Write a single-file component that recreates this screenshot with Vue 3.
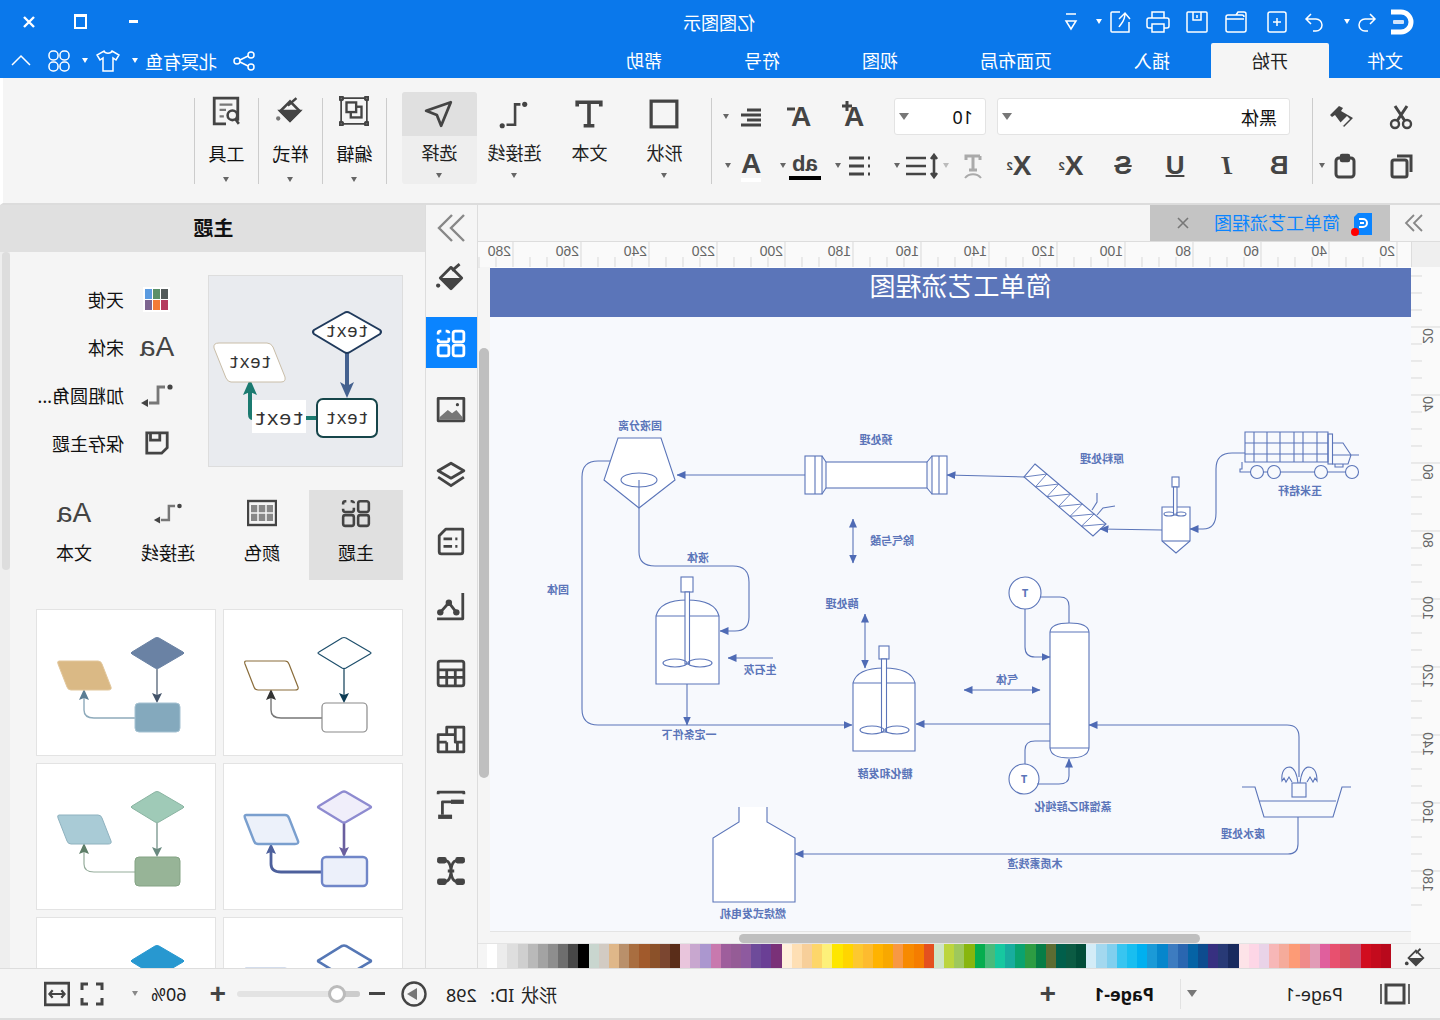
<template>
  <div class="app">
    <!-- title bar -->
    <header class="titlebar">
      <div class="qa">
        <svg class="logo" viewBox="0 0 26 26" width="26" height="26"><path d="M24 3H14a10 10 0 0 0 0 20h10" fill="none" stroke="#fff" stroke-width="5"/><rect x="11" y="11" width="11" height="4" rx="1" fill="#cfe3fb"/></svg>
        <svg class="qi m10" viewBox="0 0 24 24"><path d="M9 4 4 9l5 5M4 9h10a6 6 0 0 1 0 12h-3"/></svg>
        <i class="car w m5"></i>
        <svg class="qi m18" viewBox="0 0 24 24"><path d="m15 4 5 5-5 5M20 9H10a6 6 0 0 0 0 12h3"/></svg>
        <svg class="qi m13" viewBox="0 0 24 24"><rect x="3" y="2" width="18" height="20" rx="2"/><path d="M12 8v8M8 12h8"/></svg>
        <svg class="qi m17" viewBox="0 0 24 24"><path d="M2 8V20a2 2 0 0 0 2 2h16a2 2 0 0 0 2-2V7a2 2 0 0 0-2-2H6a2 2 0 0 0-2 2M4 9h18M2 8V4a2 2 0 0 1 2-2h6l2 3"/></svg>
        <svg class="qi m15" viewBox="0 0 24 24"><path d="M3 2h18a1 1 0 0 1 1 1v18a1 1 0 0 1-1 1H3a1 1 0 0 1-1-1V3a1 1 0 0 1 1-1ZM8 2v8h8V2M12 5v3"/></svg>
        <svg class="qi m15" viewBox="0 0 24 24"><path d="M6 8V2h12v6M6 18H3a2 2 0 0 1-2-2v-6a2 2 0 0 1 2-2h18a2 2 0 0 1 2 2v6a2 2 0 0 1-2 2h-3M6 14h12v8H6z"/></svg>
        <svg class="qi m15" viewBox="0 0 24 24"><path d="M2 12v10h17a1 1 0 0 0 1-1V3a1 1 0 0 0-1-1h-8M12 9 6 3 1 9M6 3c0 9 4 10 6 14"/></svg>
        <i class="car w m5"></i>
        <svg class="qi small m13" viewBox="0 0 24 24"><path d="M7 4h10M7 11h10l-5 8z"/></svg>
      </div>
      <div class="apptitle">亿图图示</div>
      <div class="winctl">
        <span class="wmin"></span>
        <span class="wmax"></span>
        <svg viewBox="0 0 12 12" width="12" height="12"><path d="M1 1l10 10M11 1 1 11" stroke="#fff" stroke-width="2.4"/></svg>
      </div>
    </header>

    <!-- menu tabs -->
    <nav class="menubar">
      <div class="tabs">
        <span v-for="t in menus" :key="t" class="mtab" :class="{ on: t === '开始' }">{{ t }}</span>
      </div>
      <div class="userbar">
        <svg class="qi ub1" viewBox="0 0 24 24"><circle cx="5" cy="6" r="3"/><circle cx="5" cy="18" r="3"/><circle cx="19" cy="12" r="3"/><path d="M8 7l8 4M8 17l8-4"/></svg>
        <span class="uname">北冥有鱼</span>
        <i class="car w ub2"></i>
        <svg class="qi ub3" viewBox="0 0 24 24"><path d="M8 2 1 6l3 5 3-2v13h10V9l3 2 3-5-7-4c-1 3-7 3-8 0Z"/></svg>
        <i class="car w ub4"></i>
        <svg class="qi ub5" viewBox="0 0 24 24"><rect x="2" y="2" width="9" height="9" rx="4"/><rect x="13" y="2" width="9" height="9" rx="4"/><rect x="2" y="13" width="9" height="9" rx="4"/><rect x="13" y="13" width="9" height="9" rx="4"/></svg>
        <svg class="qi ub6" viewBox="0 0 24 24"><path d="m3 16 9-9 9 9"/></svg>
      </div>
    </nav>

    <!-- ribbon -->
    <section class="ribbon">
      <div class="rclip">
        <div class="crow">
          <svg class="ric cut" viewBox="0 0 26 26"><circle cx="7" cy="20" r="4"/><circle cx="19" cy="20" r="4"/><path d="M9 17 19 2M17 17 7 2" stroke-width="3"/></svg>
          <svg class="ric brush" viewBox="0 0 26 26"><path d="m15 2 9 9-2 2-3-2-9 12-9-9 12-7-2-3Z" fill="#444" stroke="none"/><path d="m7 12 7 7-3 3-7-7z" fill="#f5f5f5" stroke="none"/></svg>
        </div>
        <div class="crow r2">
          <svg class="ric cut" viewBox="0 0 26 26"><path d="M3 19V3h14" stroke-width="3"/><rect x="7" y="7" width="15" height="17" rx="2" stroke-width="3"/></svg>
          <svg class="ric paste" viewBox="0 0 26 26"><rect x="4" y="5" width="18" height="19" rx="3" stroke-width="3"/><rect x="9" y="2" width="8" height="6" rx="1" fill="#444"/></svg>
          <i class="car paste-car"></i>
        </div>
      </div>
      <i class="vsep"></i>
      <div class="rfont">
        <div class="frow1">
          <div class="sel fontsel"><span>黑体</span><i class="car lg"></i></div>
          <div class="sel sizesel"><span>10</span><i class="car lg"></i></div>
          <div class="fbtn grow"><span>A</span><svg class="fmark" viewBox="0 0 10 10" width="10" height="10"><path d="M5 0v10M0 5h10" stroke="#444" stroke-width="3"/></svg></div>
          <div class="fbtn shrink"><span>A</span><svg class="fmark lo" viewBox="0 0 10 10" width="10" height="10"><path d="M1 5h8" stroke="#444" stroke-width="3"/></svg></div>
          <svg class="ric alignic" viewBox="0 0 24 24"><path d="M2 5h14M2 10h20M2 15h14M2 20h20" stroke-width="3"/></svg>
          <i class="car alignc"></i>
        </div>
        <div class="frow2">
          <span class="fc w52 tb">B</span>
          <span class="fc w52 tb it">I</span>
          <span class="fc w52 tb ul">U</span>
          <span class="fc w52 tb st">S</span>
          <span class="fc w52 xx">X<sup>2</sup></span>
          <span class="fc w52 xx">X<sub>2</sub></span>
          <svg class="fc w40 clr" viewBox="0 0 40 26" height="26"><path d="M13 3h14v4M20 3v14M16 17h8M13 3v4" stroke="#aaa" stroke-width="3" fill="none"/><path d="M12 25c4-5 12-5 16 0" stroke="#aaa" stroke-width="2" fill="none"/></svg>
          <span class="fc w14"><i class="car lite"></i></span>
          <svg class="fc w36 ln" viewBox="0 0 36 26" height="26"><path d="M5 8V4M5 22v-4M2 6l3-4 3 4M2 20l3 4 3-4M5 7v12M13 5h20M13 13h20M13 21h20" fill="none" stroke="#444" stroke-width="2.600"/></svg>
          <span class="fc w12"><i class="car"></i></span>
          <span class="sp12"></span>
          <svg class="fc w36 ln" viewBox="0 0 36 26" height="26"><path d="M9 5h2M9 13h2M9 21h2M15 5h15M15 13h15M15 21h15" fill="none" stroke="#444" stroke-width="2.800"/></svg>
          <span class="fc w10"><i class="car"></i></span>
          <span class="sp12"></span>
          <span class="fc w32 ab">ab</span>
          <span class="fc w12"><i class="car"></i></span>
          <span class="sp6"></span>
          <span class="fc w40"><span class="aa">A</span></span>
          <span class="fc w6"><i class="car"></i></span>
        </div>
      </div>
      <i class="vsep"></i>
      <div class="bigs">
        <div class="big">
          <div class="bic"><svg class="ric r28" viewBox="0 0 28 28"><rect x="2" y="2" width="24" height="24" stroke-width="3"/></svg></div>
          <span>形状</span><i class="car"></i>
        </div>
        <div class="big">
          <div class="bic"><svg class="ric r28" viewBox="0 0 28 28"><path d="M3 7V3h22v4M14 3v22M9 25h10" stroke-width="3.400"/></svg></div>
          <span>文本</span>
        </div>
        <div class="big">
          <div class="bic"><svg class="ric r28" viewBox="0 0 28 28"><circle cx="4" cy="5" r="2.400" fill="#444" stroke="none"/><circle cx="25" cy="25" r="2.400" fill="#444" stroke="none"/><path d="M8 5h5v19h8"/></svg></div>
          <span>连接线</span><i class="car"></i>
        </div>
        <div class="big sel-on">
          <div class="bic"><svg class="ric r28" viewBox="0 0 28 28"><path d="M3 3 26 11l-10 4-4 10Z" stroke-width="2.600" stroke-linejoin="round"/></svg></div>
          <span>选择</span><i class="car"></i>
        </div>
      </div>
      <i class="vsep s15"></i>
      <div class="tool">
        <svg class="ric r28" viewBox="0 0 28 28"><rect x="2" y="2" width="24" height="24" rx="1" stroke-width="1.600"/><circle cx="2" cy="2" r="1.600" fill="#f5f5f5"/><circle cx="26" cy="2" r="1.600" fill="#f5f5f5"/><circle cx="2" cy="26" r="1.600" fill="#f5f5f5"/><circle cx="26" cy="26" r="1.600" fill="#f5f5f5"/><rect x="7" y="10" width="10" height="10" stroke-width="2.200"/><rect x="12" y="6" width="9" height="9" stroke-width="2.200" fill="#f5f5f5"/></svg>
        <span>编辑</span><i class="car"></i>
      </div>
      <div class="tool">
        <svg class="ric r28" viewBox="0 0 28 28"><path d="M8 2 16 9" stroke-width="2.400"/><path d="m14 5 9 9-9 9-9-9Z" stroke-width="2.400"/><path d="m5 14h18l-9 9Z" fill="#444"/><circle cx="25" cy="21" r="2" fill="#777" stroke="none"/></svg>
        <span>样式</span><i class="car"></i>
      </div>
      <div class="tool">
        <svg class="ric r28" viewBox="0 0 28 28"><path d="M3 23V2h22v24H14" stroke-width="2.600"/><path d="M8 8h12M14 13h6M16 19h4" stroke-width="2.200" stroke="#777"/><circle cx="8" cy="18" r="4.500" stroke-width="2.400"/><path d="m5 22-3 4" stroke-width="2.400"/></svg>
        <span>工具</span><i class="car"></i>
      </div>
    </section>

    <main class="main">
      <!-- canvas side -->
      <div class="cv">
        <div class="tabbar">
          <svg class="tchev" viewBox="0 0 20 20" width="20" height="20"><path d="m2 2 8 8-8 8M10 2l8 8-8 8" fill="none" stroke="#888" stroke-width="1.800"/></svg>
          <div class="doctab">
            <svg viewBox="0 0 24 26" width="24" height="26" class="docic"><path d="M3 3h14l4 4v18H3z" fill="#0a84ff"/><path d="M16 9h-4a4 4 0 0 0 0 8h4M11 13h4" fill="none" stroke="#fff" stroke-width="2"/><circle cx="20" cy="22" r="4" fill="#f00"/></svg>
            <span class="docname">简单工艺流程图</span>
            <svg viewBox="0 0 12 12" width="12" height="12" class="docx"><path d="m1 1 10 10M11 1 1 11" stroke="#777" stroke-width="1.600"/></svg>
          </div>
        </div>
        <div class="rulerh">
          <span class="corner"></span>
          <svg width="934" height="26" viewBox="0 0 934 26">
            <path v-for="k in hTicks" :key="k.x" :d="`M${k.x} ${k.major ? 0 : 15}V26`" stroke="#d9d9d9" fill="none"/>
            <text v-for="k in hNums" :key="k.n" :x="k.x + 2" y="14" class="rnum">{{ k.n }}</text>
          </svg>
        </div>
        <div class="work">
          <svg class="rulerv" width="29" height="676" viewBox="0 0 29 676">
            <path v-for="y in vTicks" :key="y.y" :d="`M${y.major ? 0 : 18} ${y.y}H29`" stroke="#d9d9d9" fill="none"/>
            <text v-for="y in vNums" :key="y.n" class="rnum" text-anchor="middle" :transform="`translate(17 ${y.y + 9}) rotate(-90)`">{{ y.n }}</text>
          </svg>
          <div class="sheet">
            <div class="band">简单工艺流程图</div>
            <svg class="dia" viewBox="0 317 921 614" width="921" height="614">
              <defs>
                <marker id="arw" viewBox="0 0 9 8" refX="8.500" refY="4" markerWidth="9" markerHeight="8" markerUnits="userSpaceOnUse" orient="auto-start-reverse"><path d="M0 0 9 4 0 8Z" fill="#4f6bb5"/></marker>
              </defs>
              <g transform="translate(1411 0) scale(-1 1)" fill="none" stroke="#5b75b9" stroke-width="1.100">
                <!-- separator -->
                <path d="M618 438h43l14 42-36 28-35-28Z" fill="#fff"/>
                <ellipse cx="639" cy="480" rx="18" ry="7"/>
                <path d="M639 480v72q0 14 16 14h78q16 0 16 16v35q0 14-14 14h-15" marker-end="url(#arw)"/>
                <path d="M610 461h-12q-16 0-16 16v232q0 16 16 16h254" marker-end="url(#arw)"/>
                <!-- pipe -->
                <rect x="826" y="462" width="101" height="26" fill="#fff"/>
                <rect x="805" y="456" width="17" height="38" fill="#fff"/>
                <path d="M815 456v38M822 456l4 6M822 494l4-6"/>
                <rect x="932" y="456" width="15" height="38" fill="#fff"/>
                <path d="M939 456v38M932 456l-5 6M932 494l-5-6"/>
                <path d="M805 475H677" marker-end="url(#arw)"/>
                <path d="M1025 477l-78-2" marker-end="url(#arw)"/>
                <!-- screw -->
                <path d="M1035 464 1106 524 1093 536 1024 477Z" fill="#fff"/>
                <path :d="screw" stroke-width=".9"/>
                <path d="M1097 493v9l-5 8M1115 506l-12 2-6 7"/>
                <path d="M1162 530l-62-1" marker-end="url(#arw)"/>
                <!-- small mixer -->
                <path d="M1162 507h28v34l-14 12-14-12Z" fill="#fff"/>
                <path d="M1162 541h28"/>
                <rect x="1172" y="477" width="7" height="10" fill="#fff"/>
                <rect x="1173.500" y="487" width="3.500" height="28" fill="#fff"/>
                <ellipse cx="1169" cy="514" rx="5" ry="2"/>
                <ellipse cx="1181" cy="514" rx="5" ry="2"/>
                <!-- truck -->
                <path d="M1245 432h83v30h-83ZM1254 432v30M1267 432v30M1280 432v30M1294 432v30M1303 432v30M1317 432v30M1245 443h83M1245 454h83"/>
                <rect x="1328" y="434" width="4.500" height="30"/>
                <path d="M1332 443h11l8 12-3 9h-16M1332 455h27M1343 443l8 12M1242 462v7h-2v3h105M1335 464v3h8v-3"/>
                <circle v-for="w in [1257, 1274, 1321, 1352]" :key="w" :cx="w" cy="472" r="6.500" fill="#f7f9fd"/>
                <path d="M1245 453h-13q-16 0-16 16v44q0 16-13 16h-13" marker-end="url(#arw)"/>
                <!-- tank 1 -->
                <path d="M656 616v68h63v-68Q715 600 687 600 660 600 656 616Z" fill="#fff"/>
                <path d="M656 616h63"/>
                <rect x="681" y="577" width="12" height="15" fill="#fff"/>
                <rect x="685" y="592" width="4.500" height="72" fill="#fff"/>
                <ellipse cx="675" cy="663" rx="12" ry="4"/>
                <ellipse cx="700" cy="663" rx="12" ry="4"/>
                <path d="M687 684v41" marker-end="url(#arw)"/>
                <path d="M773 658h-45" marker-end="url(#arw)"/>
                <path d="M853 519v44" marker-start="url(#arw)" marker-end="url(#arw)"/>
                <!-- tank 2 -->
                <path d="M853 683v68h62v-68Q911 668 884 668 857 668 853 683Z" fill="#fff"/>
                <path d="M853 683h62"/>
                <rect x="879" y="646" width="10" height="13" fill="#fff"/>
                <rect x="881.500" y="659" width="5" height="73" fill="#fff"/>
                <ellipse cx="872" cy="730" rx="12" ry="4"/>
                <ellipse cx="897" cy="730" rx="12" ry="4"/>
                <path d="M865 614v54" marker-start="url(#arw)" marker-end="url(#arw)"/>
                <!-- column -->
                <path d="M1050 632v116q1 10 19.500 10 18.500 0 19.500-10V632q-1-9-19.500-9-18.500 0-19.500 9Z" fill="#fff"/>
                <path d="M1050 632h39M1050 748h39"/>
                <circle cx="1025" cy="593" r="16" fill="#fff"/>
                <circle cx="1024" cy="779" r="15" fill="#fff"/>
                <path d="M1040 597h20q9 0 9 9v17M1025 609v38q0 10 10 10h15" marker-end="url(#arw)"/>
                <path d="M1050 741h-15q-10 0-10 9v14M1037 784h22q10 0 10-8v-17" marker-end="url(#arw)"/>
                <path d="M1050 724H916" marker-end="url(#arw)"/>
                <path d="M964 690h76" marker-start="url(#arw)" marker-end="url(#arw)"/>
                <path d="M1299 777v-40q0-12-12-12H1089" marker-end="url(#arw)"/>
                <!-- waste water -->
                <path d="M1242 787h13l9 30h69l9-30h9M1259 801h77"/>
                <rect x="1292" y="783" width="14" height="14"/>
                <path d="M1298 783c-1-8-3-15-8-16-5 0-9 4-8 14l2-3 2 4 3-5 3 5M1300 783c1-8 3-15 8-16 5 0 9 4 9 14l-2-3-2 4-3-5-3 5"/>
                <path d="M1298 817v27q0 10-10 10H795" marker-end="url(#arw)"/>
                <!-- generator -->
                <path d="M739 807v15l-26 16v64h82v-64l-28-16v-15" fill="#fff"/>
              </g>
              <text v-for="l in labels" :key="l.t" class="lab" :x="1411 - l.x" :y="l.y + 4" text-anchor="middle">{{ l.t }}</text>
            </svg>
            <div class="hscroll"><i></i></div>
          </div>
          <div class="vscroll"><i></i></div>
        </div>
        <div class="palette">
          <svg class="pbucket" viewBox="0 0 24 24" width="22" height="22"><path d="M6 3l5 5" stroke="#444" stroke-width="2"/><path d="m11 5 8 8-8 8-8-8Z" fill="none" stroke="#444" stroke-width="2"/><path d="M3 13h16l-8 8Z" fill="#444"/><circle cx="21" cy="19" r="2" fill="#444"/></svg>
          <div class="swatches">
            <i v-for="(c, i) in colors" :key="i" :style="{ background: c }"></i>
          </div>
          <span class="pend"></span>
        </div>
      </div>

      <!-- tool strip -->
      <aside class="strip">
        <div class="chev"><svg viewBox="0 0 30 30" width="30" height="30"><path d="m2 2 13 13L2 28M14 2l13 13-13 13" fill="none" stroke="#888" stroke-width="2.400"/></svg></div>
        <div class="sitem"><svg viewBox="0 0 28 28"><path d="M6 2l7 6"/><path d="m14 5 10 10-10 10L4 15Z"/><path d="M4 15h20L14 25Z" class="fil"/><circle cx="26" cy="22" r="2" class="fil"/></svg></div>
        <div class="sitem on"><svg viewBox="0 0 28 28"><rect x="2" y="3" width="10" height="10" rx="2"/><path d="M16 5a2 2 0 0 1 2-2h1M23 3h1a2 2 0 0 1 2 2v1M26 10v1a2 2 0 0 1-2 2h-6a2 2 0 0 1-2-2V9"/><rect x="2" y="16" width="10" height="10" rx="2"/><rect x="16" y="16" width="10" height="10" rx="2"/></svg></div>
        <div class="sitem"><svg viewBox="0 0 28 28"><rect x="2" y="4" width="24" height="21" stroke-width="2.600"/><circle cx="8" cy="10" r="1.500" class="fil"/><path d="M3 22l6-7 4 3 4-3 8 7v2H3Z" class="fil grey"/></svg></div>
        <div class="sitem"><svg viewBox="0 0 28 28"><path d="M14 3l12 7-12 7-12-7Z"/><path d="m2 16 12 8 12-8"/></svg></div>
        <div class="sitem"><svg viewBox="0 0 28 28"><path d="M3 3h16l6 6v15a2 2 0 0 1-2 2H5a2 2 0 0 1-2-2Z"/><path d="M8 12h2M8 19h2M13 12h8M13 19h8" /></svg></div>
        <div class="sitem"><svg viewBox="0 0 28 28"><path d="M3 1v24h24" /><circle cx="9" cy="19" r="3" class="fil"/><circle cx="16" cy="10" r="3" class="fil"/><circle cx="24" cy="19" r="3" class="fil"/><path d="m9 19 7-9 8 9"/></svg></div>
        <div class="sitem"><svg viewBox="0 0 28 28"><rect x="2" y="3" width="24" height="23" rx="2"/><path d="M2 11h24M2 18h24M10 11v15M18 11v15"/></svg></div>
        <div class="sitem"><svg viewBox="0 0 28 28"><path d="M2 3h16v7h8v16H2ZM2 17h6v9M10 3v7h8M10 10v7H8M18 17h8M18 17v9"/></svg></div>
        <div class="sitem"><svg viewBox="0 0 28 28"><path d="M2 4V2h24v2" /><path d="M2 11h12" stroke-width="4"/><path d="M14 11h8v12" /><path d="M13 25h13" stroke-width="4"/></svg></div>
        <div class="sitem"><svg viewBox="0 0 28 28"><path d="M8 4c6 0 6 10 6 10s0 10-6 10M20 4c-6 0-6 10-6 10s0 10 6 10M11 14h6"/><rect x="1" y="1" width="9" height="6" rx="2" class="fil"/><rect x="18" y="1" width="9" height="6" rx="2" class="fil"/><rect x="1" y="21" width="9" height="6" rx="2" class="fil"/><rect x="18" y="21" width="9" height="6" rx="2" class="fil"/></svg></div>
      </aside>

      <!-- theme panel -->
      <aside class="panel">
        <div class="phead">主题</div>
        <div class="pbody">
          <div class="pcontent">
            <div class="ptop">
              <div class="preview">
                <svg viewBox="0 0 195 192" width="195" height="192">
                  <g transform="translate(403 -275) scale(-1 1)" fill="none">
                    <path d="M347 353v38" stroke="#44618f" stroke-width="4"/>
                    <path d="m340 382 7 16 7-16-7 4Z" fill="#44618f"/>
                    <path d="M317 418h-64q-3 0-3-4v-22" stroke="#1b7a70" stroke-width="4"/>
                    <path d="m243 395 7-16 7 16-7-3Z" fill="#1b7a70"/>
                    <path d="M344 313q3-2 6 0l30 17q2 2 0 4l-30 18q-3 2-6 0l-30-18q-2-2 0-4Z" fill="#fff" stroke="#203a5c" stroke-width="2"/>
                    <rect x="317" y="399" width="60" height="38" rx="6" fill="#fff" stroke="#16454a" stroke-width="2"/>
                    <path d="M219 343h48q4 0 6 4l12 30q1 5-4 5h-50q-3 0-5-4l-12-30q-1-5 5-5Z" fill="#fff" stroke="#c9bda8"/>
                  </g>
                  <rect x="97" y="125" width="54" height="33" fill="#fff"/>
                  <text x="56" y="62" class="pv" text-anchor="middle">text</text>
                  <text x="56" y="149" class="pv" text-anchor="middle">text</text>
                  <text x="153" y="93" class="pv" text-anchor="middle">text</text>
                  <text x="124" y="150" class="pv lg" text-anchor="middle">text</text>
                </svg>
              </div>
              <div class="plist">
                <div class="pli">
                  <span class="pic"><span class="pal"><i v-for="c in angel" :key="c" :style="{ background: c }"></i></span></span>
                  <span class="ptx">天使</span>
                </div>
                <div class="pli"><span class="pic aatx">Aa</span><span class="ptx">宋体</span></div>
                <div class="pli">
                  <span class="pic"><svg viewBox="0 0 34 28" width="34" height="28" class="ric"><circle cx="4" cy="6" r="2.600" fill="#444" stroke="none"/><path d="M9 6h7v16h9" stroke-width="2.800" stroke="#777"/><path d="m33 22-7-4v8Z" fill="#444" stroke="none"/></svg></span>
                  <span class="ptx">加粗圆角...</span>
                </div>
                <div class="pli">
                  <span class="pic"><svg viewBox="0 0 28 28" width="26" height="26" class="ric"><path d="M3 3h22v22H9l-6-6ZM11 3v8h10V3" stroke-width="3"/></svg></span>
                  <span class="ptx">保存主题</span>
                </div>
              </div>
            </div>
            <div class="ptabs">
              <div class="ptab on">
                <svg viewBox="0 0 28 28" class="ric r28"><rect x="2" y="3" width="10" height="10" rx="2" stroke-width="2.400"/><path d="M16 5a2 2 0 0 1 2-2h1M23 3h1a2 2 0 0 1 2 2v1M26 10v1a2 2 0 0 1-2 2h-6a2 2 0 0 1-2-2V9" stroke-width="2.400"/><rect x="2" y="16" width="10" height="10" rx="2" stroke-width="2.400"/><rect x="16" y="16" width="10" height="10" rx="2" stroke-width="2.400"/></svg>
                <span>主题</span>
              </div>
              <div class="ptab">
                <svg viewBox="0 0 30 26" class="ric r28"><rect x="1" y="1" width="28" height="24" stroke-width="2.400"/><path d="M4 5h22v16H4Z" fill="#888" stroke="none"/><path d="M11 5v16M19 5v16M4 13h22" stroke="#f5f5f5" stroke-width="1.500"/></svg>
                <span>颜色</span>
              </div>
              <div class="ptab">
                <svg viewBox="0 0 34 28" class="ric r28"><circle cx="4" cy="6" r="2.600" fill="#444" stroke="none"/><path d="M9 6h7v16h9" stroke-width="2.800" stroke="#777"/><path d="m33 22-7-4v8Z" fill="#444" stroke="none"/></svg>
                <span>连接线</span>
              </div>
              <div class="ptab">
                <em class="aatx">Aa</em>
                <span>文本</span>
              </div>
            </div>
            <div class="cards">
              <div v-for="(c, i) in themes" :key="i" class="card">
                <svg viewBox="0 0 180 147" width="180" height="147">
                  <g transform="translate(180 0) scale(-1 1)">
                    <path d="M121 60V92" :stroke="c.a1" :stroke-width="c.w1" fill="none"/>
                    <path d="m116 84 5 10 5-10-5 2Z" :fill="c.a1"/>
                    <path d="M99 109H58q-10 0-10-8V85" :stroke="c.a2" :stroke-width="c.w2" fill="none" />
                    <path d="m43 91 5-11 5 11-5-2Z" :fill="c.ah || c.a2"/>
                    <path d="M119 29q2-1 4 0l24 14q2 1 0 2l-24 14q-2 1-4 0L96 45q-2-1 0-2Z" :fill="c.df" :stroke="c.ds" :stroke-width="c.sw"/>
                    <rect x="99" y="94" width="45" height="29" rx="4" :fill="c.rf" :stroke="c.rs" :stroke-width="c.sw"/>
                    <path d="M23 52h39q3 0 4 3l9 23q1 3-3 3H35q-3 0-4-3l-9-23q-1-3 1-3Z" :fill="c.pf" :stroke="c.ps" :stroke-width="c.sw"/>
                  </g>
                </svg>
              </div>
            </div>
          </div>
          <div class="pscroll"><i></i></div>
        </div>
      </aside>
    </main>

    <!-- status bar -->
    <footer class="status">
      <div class="st-left">
        <svg class="ric pagesic" viewBox="0 0 32 24"><path d="M2 2v20M30 2v20" stroke-width="2" stroke="#666"/><rect x="7" y="3" width="18" height="18" stroke-width="3"/></svg>
        <span class="pg1">Page-1</span>
        <i class="car lg pgc"></i>
        <span class="pgsep"></span>
        <b class="pg2">Page-1</b>
        <span class="plus pg3">+</span>
      </div>
      <div class="st-right">
        <span class="sid">形状 ID:&nbsp; 298</span>
        <svg class="ric playic" viewBox="0 0 26 26"><circle cx="13" cy="13" r="11.500" stroke-width="2.400"/><path d="M20 13 10 7v12Z" fill="#777" stroke="none"/></svg>
        <span class="minus"></span>
        <div class="slider"><i class="fill"></i><i class="knob"></i></div>
        <span class="plus pl2">+</span>
        <span class="zoomv">60%</span>
        <i class="car zoomc"></i>
        <svg class="ric fsic" viewBox="0 0 24 24"><path d="M2 8V2h6M16 2h6v6M22 16v6h-6M8 22H2v-6" stroke-width="3"/></svg>
        <svg class="ric fitic" viewBox="0 0 24 24"><rect x="1" y="2" width="22" height="20" stroke-width="2.600"/><path d="M5 12h14M8 8.500 5 12l3 3.500M16 8.500l3 3.500-3 3.500" stroke-width="2"/></svg>
      </div>
    </footer>
  </div>
</template>

<script setup>
const menus = ["文件", "开始", "插入", "页面布局", "视图", "符号", "帮助"];

const hTicks = [];
const hNums = [];
for (let i = 0; i < 56; i++) {
  const x = 14 + i * 17;
  hTicks.push({ x, major: i % 4 === 0 });
  if (i % 4 === 0) hNums.push({ x, n: 20 + (i / 4) * 20 });
}
const vTicks = [];
const vNums = [];
for (let i = 0; i < 38; i++) {
  const y = 9 + i * 17;
  const major = i % 4 === 3;
  vTicks.push({ y, major });
  if (major) vNums.push({ y, n: ((i + 1) / 4) * 20 });
}

// the auger inside the tilted conveyor
let screw = "";
for (let i = 0; i <= 6; i++) {
  const tx = 1035 + 11.83 * i;
  const ty = 464 + 10 * i;
  const bx = 1024 + 11.5 * i;
  const by = 477 + 9.83 * i;
  if (i > 0 && i < 6) screw += `M${tx} ${ty}L${bx} ${by}`;
  if (i < 6) screw += `M${bx} ${by}L${tx + 11.83} ${ty + 10}`;
}

const labels = [
  { t: "固液分离", x: 640, y: 426 },
  { t: "预处理", x: 876, y: 440 },
  { t: "原料处理", x: 1102, y: 459 },
  { t: "玉米秸秆", x: 1300, y: 491 },
  { t: "液体", x: 698, y: 558 },
  { t: "除气与酸", x: 892, y: 541 },
  { t: "固体", x: 558, y: 590 },
  { t: "酶处理", x: 842, y: 604 },
  { t: "生石灰", x: 760, y: 670 },
  { t: "气体", x: 1007, y: 680 },
  { t: "一定条件下", x: 689, y: 735 },
  { t: "糖化和发酵", x: 885, y: 774 },
  { t: "蒸馏和乙醇纯化", x: 1073, y: 807 },
  { t: "废水处理", x: 1243, y: 834 },
  { t: "木质素残渣", x: 1035, y: 864 },
  { t: "燃烧式发电机", x: 753, y: 914 },
  { t: "T", x: 1025, y: 593 },
  { t: "T ", x: 1024, y: 779 },
];

const angel = ["#535a5a", "#5a9068", "#5b9be0", "#b53c5f", "#f47b36", "#7d6590"];

const themes = [
  { df: "#fff", ds: "#1d4e6b", rf: "#fff", rs: "#8a8a8a", pf: "#fff", ps: "#8a6d3b", a1: "#0d3c55", a2: "#777", ah: "#333", w1: 1.2, w2: 1.4, sw: 1.2 },
  { df: "#6a82a4", ds: "#6a82a4", rf: "#84a9bd", rs: "#a5c2d2", pf: "#dab985", ps: "#e2c79c", a1: "#44546a", a2: "#8eaabb", ah: "#5a7d94", w1: 1.2, w2: 1.4, sw: 1 },
  { df: "#f0eefa", ds: "#8e8bd0", rf: "#ecf0fa", rs: "#7086c8", pf: "#ecf1fa", ps: "#7a9fce", a1: "#6a5f9f", a2: "#4d609c", w1: 2.6, w2: 2.8, sw: 2.4 },
  { df: "#9fcab7", ds: "#8ab4a2", rf: "#97b497", rs: "#84a384", pf: "#a9cbd6", ps: "#8fb2bf", a1: "#6a8a80", a2: "#96ad9c", ah: "#5e7e68", w1: 1.2, w2: 1.2, sw: 1 },
  { df: "#fff", ds: "#5577b5", rf: "#fff", rs: "#5577b5", pf: "#fff", ps: "#5577b5", a1: "#5577b5", a2: "#5577b5", w1: 2.6, w2: 2.6, sw: 2.6 },
  { df: "#2898d0", ds: "#2898d0", rf: "#2898d0", rs: "#2898d0", pf: "#2898d0", ps: "#2898d0", a1: "#2898d0", a2: "#2898d0", w1: 1.4, w2: 1.4, sw: 1 },
];

const colors = [
  "#ffffff", "#ececec", "#dedede", "#cfcfcf", "#b9b9b9", "#a3a3a3", "#8e8e8e", "#6e6e6e", "#474747", "#000000",
  "#c9d6cf", "#d2cbc3", "#dfb789", "#b9906b", "#a96e40", "#a15a2c", "#8b5129", "#7b4630", "#5a2d19",
  "#e9c5dc", "#c8a7cf", "#ab97cf", "#c879ae", "#9e5e9c", "#955c96", "#8e5a9f", "#6e4b9a", "#6a3f95", "#7a3178",
  "#fff0dc", "#fedfb4", "#f7cf9a", "#fdd66a", "#fdf07a", "#fee600", "#ffd500", "#fdc82f", "#fdbb2f", "#ffb300", "#f8a800", "#f89843", "#f78a00", "#f57d00", "#e4501f",
  "#cfe4c6", "#bcd53e", "#9ec85c", "#88b60e", "#06ad4f", "#48bb7b", "#17c8a0", "#18ad9e", "#0aa36f", "#2d9c43", "#067d46", "#5c6c32", "#015f4b", "#0b5b43", "#014d39",
  "#d3ecf7", "#a3d8ef", "#80cfee", "#38c5f0", "#19bef0", "#00b0f0", "#1b9ad7", "#0686cc", "#3d7cc0", "#2a66b0", "#0563a5", "#0d4c8f", "#373080", "#283a76", "#192a5e",
  "#fde3e8", "#fdd6e6", "#e9d3e8", "#f7b7b7", "#f5ab9b", "#fd9b76", "#ef8b8b", "#e19bb6", "#e05f9d", "#e8506f", "#d94f60", "#c94f75", "#d10d1f", "#c40b1d", "#b8091c",
].reverse();
</script>

<style>
html,
body {
  margin: 0;
  background: #f5f5f5;
}
</style>

<style scoped>
.app {
  width: 1440px;
  height: 1020px;
  overflow: hidden;
  display: flex;
  flex-direction: column;
  transform: scaleX(-1);
  background: #f5f5f5;
  color: #222;
  font-family: "Noto Sans", "Noto Sans CJK SC", sans-serif;
  font-size: 18px;
}
i {
  display: block;
  font-style: normal;
}
.car {
  width: 0;
  height: 0;
  border-top: 5px solid #666;
  border-left: 3.5px solid transparent;
  border-right: 3.5px solid transparent;
  flex: none;
}
.car.w {
  border-top-color: #fff;
}
.car.lg {
  border-top-width: 7px;
  border-left-width: 5px;
  border-right-width: 5px;
  border-top-color: #777;
}
.car.lite {
  border-top-color: #bbb;
}

/* title */
.titlebar {
  height: 43px;
  background: #0a78eb;
  display: flex;
  align-items: center;
  color: #fff;
}
.qa {
  flex: 1;
  display: flex;
  align-items: center;
  padding-left: 25px;
}
.qi {
  width: 24px;
  height: 24px;
  flex: none;
  fill: none;
  stroke: #fff;
  stroke-width: 1.5;
}
.m5 { margin-left: 5px; }
.m10 { margin-left: 10px; }
.m13 { margin-left: 13px; }
.m15 { margin-left: 15px; }
.m17 { margin-left: 17px; }
.m18 { margin-left: 18px; }
.logo {
  flex: none;
}
.apptitle {
  font-size: 18px;
  width: 80px;
  text-align: center;
  white-space: nowrap;
}
.winctl {
  flex: 1;
  display: flex;
  align-items: center;
  justify-content: flex-end;
  padding-right: 23px;
}
.wmin {
  width: 9px;
  height: 3px;
  background: #fff;
}
.wmax {
  width: 9px;
  height: 10px;
  border: 2px solid #fff;
  border-top-width: 3px;
  margin: 0 39px 0 42px;
}

/* menu */
.menubar {
  height: 35px;
  background: #0a78eb;
  display: flex;
  color: #fff;
}
.tabs {
  display: flex;
  margin-left: -4px;
}
.mtab {
  padding: 0 41px;
  line-height: 36px;
  font-size: 18px;
}
.mtab:first-child {
  padding-right: 38px;
}
.mtab.on {
  background: #f5f5f5;
  color: #222;
  border-radius: 2px 2px 0 0;
}
.userbar {
  margin-left: auto;
  display: flex;
  align-items: center;
  padding-right: 9px;
}
.ub1 { margin-right: 15px; }
.uname { margin-right: 7px; white-space: nowrap; }
.ub2 { margin-right: 12px; }
.ub3 { margin-right: 8px; }
.ub4 { margin-right: 11px; }
.ub5 { margin-right: 14px; }
.ub6 { width: 24px; }

/* ribbon */
.ribbon {
  height: 127px;
  box-sizing: border-box;
  padding-top: 20px;
  border-bottom: 2px solid #dcdcdc;
  border-right: 3px solid #fff;
  display: flex;
  align-items: flex-start;
}
.ric {
  fill: none;
  stroke: #444;
  stroke-width: 2.4;
  flex: none;
}
.r28 {
  width: 30px;
  height: 30px;
}
.vsep {
  width: 1px;
  height: 86px;
  background: #ccc;
  flex: none;
}
.rclip {
  width: 127px;
}
.crow {
  height: 37px;
  display: flex;
  align-items: center;
}
.crow.r2 {
  margin-top: 12px;
}
.cut {
  width: 26px;
  height: 26px;
  margin-left: 26px;
}
.brush {
  width: 26px;
  height: 26px;
  margin-left: 34px;
}
.paste {
  width: 26px;
  height: 26px;
  margin-left: 30px;
}
.paste-car {
  margin-left: 7px;
}
.rfont {
  width: 600px;
}
.frow1 {
  height: 37px;
  display: flex;
  align-items: center;
  padding-left: 22px;
}
.sel {
  height: 37px;
  box-sizing: border-box;
  background: #fff;
  border: 1px solid #e3e3e3;
  border-radius: 3px;
  display: flex;
  align-items: center;
  justify-content: space-between;
  padding: 0 4px 0 12px;
  color: #111;
}
.fontsel { width: 293px; }
.sizesel { width: 92px; margin-left: 11px; }
.fbtn {
  width: 40px;
  position: relative;
  text-align: center;
  font: 700 28px/37px "Liberation Sans", sans-serif;
  color: #444;
}
.fmark {
  position: absolute;
  top: 3px;
  right: 8px;
}
.fmark.lo {
  top: 6px;
  right: 5px;
}
.grow { margin-left: 20px; }
.shrink { margin-left: 13px; }
.alignic {
  width: 24px;
  height: 24px;
  margin-left: 18px;
  stroke-width: 3;
}
.alignc {
  margin-left: 10px;
}
.frow2 {
  height: 37px;
  margin-top: 12px;
  display: flex;
  align-items: center;
  padding-left: 7px;
}
.fc {
  display: flex;
  align-items: center;
  justify-content: center;
  flex: none;
  color: #444;
  font-family: "Liberation Sans", sans-serif;
}
.w52 { width: 52px; }
.w40 { width: 40px; }
.w36 { width: 36px; }
.w32 { width: 32px; }
.w14 { width: 14px; }
.w12 { width: 12px; }
.w10 { width: 10px; }
.w6 { width: 6px; }
.sp12 { width: 12px; flex: none; }
.sp6 { width: 6px; flex: none; }
.tb {
  font-size: 26px;
  font-weight: 700;
}
.it { font-style: italic; font-family: "Liberation Serif", serif; }
.ul { text-decoration: underline; text-underline-offset: 1px; }
.st { text-decoration: line-through; }
.xx {
  font-size: 28px;
  font-weight: 700;
}
.xx sup,
.xx sub {
  font-size: 11px;
  line-height: 0;
}
.ab {
  font-size: 22px;
  font-weight: 700;
  line-height: 24px;
  border-bottom: 4px solid #000;
  height: 28px;
  box-sizing: border-box;
  align-items: flex-start;
}
.aa {
  font-size: 28px;
  font-weight: 700;
  line-height: 28px;
  border-bottom: 4px solid #fff;
}
.bigs {
  display: flex;
  margin-left: 9px;
  margin-top: -6px;
}
.big {
  width: 75px;
  height: 92px;
  display: flex;
  flex-direction: column;
  align-items: center;
  border-radius: 3px;
}
.bic {
  width: 100%;
  height: 44px;
  display: flex;
  align-items: center;
  justify-content: center;
  margin-bottom: 2px;
}
.big span {
  line-height: 30px;
}
.sel-on {
  background: #eee;
}
.sel-on .bic {
  background: #e0e0e0;
  border-radius: 3px 3px 0 0;
}
.big .car {
  margin-top: 5px;
}
.s15 {
  margin-left: 15px;
}
.tool {
  width: 63px;
  height: 86px;
  border-right: 1px solid #ccc;
  display: flex;
  flex-direction: column;
  align-items: center;
  color: #111;
}
.tool svg {
  margin-top: -2px;
}
.tool span {
  margin-top: 13px;
  line-height: 30px;
}
.tool .car {
  margin-top: 8px;
}

/* main */
.main {
  height: 763px;
  display: flex;
  overflow: hidden;
}
.cv {
  width: 962px;
  flex: none;
  display: flex;
  flex-direction: column;
}
.tabbar {
  height: 36px;
  display: flex;
  align-items: center;
  flex: none;
}
.tchev {
  margin: 0 14px 0 16px;
  flex: none;
}
.doctab {
  width: 240px;
  height: 36px;
  background: #c4c4c4;
  display: flex;
  align-items: center;
  padding-left: 15px;
  box-sizing: border-box;
}
.docname {
  color: #0a84ff;
  margin-left: 11px;
  white-space: nowrap;
  line-height: 36px;
}
.docx {
  margin-left: 25px;
}
.rulerh {
  height: 26px;
  display: flex;
  background: #fafafa;
  border-top: 1px solid #ddd;
  box-sizing: border-box;
  flex: none;
}
.rulerh svg {
  flex: none;
}
.corner {
  width: 28px;
  flex: none;
  background: #efefef;
  border-right: 1px solid #ddd;
}
.rnum {
  font: 14px "Liberation Sans", sans-serif;
  fill: #666;
}
.work {
  height: 676px;
  display: flex;
  flex: none;
}
.rulerv {
  flex: none;
  background: #fafafa;
}
.sheet {
  width: 921px;
  flex: none;
  display: flex;
  flex-direction: column;
}
.band {
  height: 50px;
  background: #5b75b9;
  color: #fff;
  font-size: 26px;
  line-height: 37px;
  text-align: center;
  padding-right: 20px;
  box-sizing: border-box;
  flex: none;
  border-top: 1px solid #fff;
}
.dia {
  display: block;
  background: #f7f9fd;
  flex: none;
}
.lab {
  font-size: 11px;
  font-weight: 700;
  fill: #5b75b9;
}
.hscroll {
  height: 12px;
  padding-top: 2px;
  box-sizing: border-box;
  border-top: 1px solid #e4e4e4;
}
.hscroll i {
  margin-left: 211px;
  width: 461px;
  height: 9px;
  background: #bfbfbf;
  border-radius: 5px;
}
.vscroll {
  width: 12px;
  flex: none;
  padding-top: 81px;
  box-sizing: border-box;
}
.vscroll i {
  width: 10px;
  height: 430px;
  margin-left: 1px;
  background: #bfbfbf;
  border-radius: 5px;
}
.palette {
  height: 25px;
  display: flex;
  align-items: stretch;
  flex: none;
  border-top: 1px solid #e4e4e4;
  box-sizing: border-box;
}
.pbucket {
  margin: 2px 13px 0 14px;
  flex: none;
}
.swatches {
  width: 904px;
  flex: none;
  display: flex;
}
.swatches i {
  flex: 1;
}

/* strip */
.strip {
  width: 51px;
  flex: none;
  border-left: 1px solid #ddd;
  border-right: 1px solid #ddd;
  display: flex;
  flex-direction: column;
  align-items: center;
}
.chev {
  height: 39px;
  padding-top: 8px;
  box-sizing: border-box;
  flex: none;
}
.sitem {
  width: 51px;
  height: 66px;
  display: flex;
  align-items: center;
  justify-content: center;
  flex: none;
}
.sitem svg {
  width: 30px;
  height: 30px;
  fill: none;
  stroke: #444;
  stroke-width: 2.6;
  stroke-linejoin: round;
}
.sitem .fil {
  fill: #444;
  stroke: none;
}
.sitem .grey {
  fill: #777;
}
.sitem.on {
  background: linear-gradient(#f5f5f5 7px, #0a84ff 7px, #0a84ff 58px, #f5f5f5 58px);
}
.sitem.on svg {
  stroke: #fff;
}

/* panel */
.panel {
  flex: 1;
  display: flex;
  flex-direction: column;
  min-width: 0;
}
.phead {
  height: 47px;
  flex: none;
  background: #e0e0e0;
  font-weight: 700;
  font-size: 20px;
  color: #111;
  text-align: center;
  line-height: 48px;
  padding-right: 2px;
}
.pbody {
  flex: 1;
  display: flex;
  min-height: 0;
}
.pcontent {
  width: 415px;
  box-sizing: border-box;
  padding: 23px 0 0 22px;
  flex: none;
}
.pscroll {
  width: 10px;
  flex: none;
  background: #eee;
}
.pscroll i {
  width: 8px;
  height: 318px;
  background: #ddd;
  border-radius: 4px;
}
.ptop {
  display: flex;
}
.preview {
  width: 195px;
  height: 192px;
  background: #e9ebef;
  outline: 1px solid #ddd;
  outline-offset: -1px;
  flex: none;
}
.pv {
  font: 18px "Liberation Mono", monospace;
  fill: #333;
}
.pv.lg {
  font-size: 21px;
}
.plist {
  margin-left: 34px;
}
.pli {
  height: 48px;
  display: flex;
  align-items: center;
}
.pic {
  width: 34px;
  display: flex;
  justify-content: center;
  flex: none;
}
.pal {
  width: 27px;
  padding: 2px;
  box-sizing: border-box;
  background: #fff;
  display: grid;
  grid-template-columns: repeat(3, 1fr);
  gap: 1px;
  height: 25px;
}
.aatx {
  font: normal 28px/30px "Liberation Sans", sans-serif;
  color: #444;
}
.ptx {
  margin-left: 16px;
  white-space: nowrap;
  color: #111;
}
.ptabs {
  display: flex;
  margin-top: 23px;
  height: 90px;
}
.ptab {
  width: 94px;
  display: flex;
  flex-direction: column;
  align-items: center;
  padding-top: 8px;
  box-sizing: border-box;
  flex: none;
}
.ptab.on {
  background: #e0e0e0;
}
.ptab svg,
.ptab em {
  height: 30px;
  margin-bottom: 12px;
}
.ptab span {
  line-height: 26px;
  color: #111;
}
.cards {
  margin-top: 29px;
  display: grid;
  grid-template-columns: 180px 180px;
  grid-auto-rows: 147px;
  gap: 7px;
}
.card {
  background: #fff;
  outline: 1px solid #e3e3e3;
  outline-offset: -1px;
}
.card svg {
  display: block;
}

/* status */
.status {
  height: 52px;
  flex: none;
  box-sizing: border-box;
  border-top: 1px solid #ddd;
  border-bottom: 2px solid #ddd;
  display: flex;
  align-items: center;
  justify-content: space-between;
  padding: 0 44px 0 29px;
  background: #f5f5f5;
  position: relative;
  z-index: 1;
}
.st-left,
.st-right {
  display: flex;
  align-items: center;
}
.pagesic {
  width: 32px;
  height: 24px;
}
.pg1 {
  margin-left: 36px;
  width: 60px;
  color: #222;
  white-space: nowrap;
}
.pgc {
  margin-left: 86px;
}
.pgsep {
  width: 1px;
  height: 30px;
  background: #e2e2e2;
  margin: 0 26px 0 6px;
}
.pg2 {
  width: 60px;
  white-space: nowrap;
  color: #111;
}
.plus {
  font: 700 28px/28px "Liberation Sans", sans-serif;
  color: #444;
}
.pg3 {
  margin-left: 38px;
}
.sid {
  color: #222;
  white-space: nowrap;
  word-spacing: 2px;
}
.playic {
  width: 26px;
  height: 26px;
  margin-left: 19px;
}
.minus {
  width: 16px;
  height: 3px;
  background: #444;
  margin-left: 16px;
}
.slider {
  width: 123px;
  height: 6px;
  margin-left: 9px;
  border-radius: 3px;
  background: #e3e3e3;
  position: relative;
}
.slider .fill {
  width: 23px;
  height: 6px;
  background: #ccc;
  border-radius: 3px;
}
.slider .knob {
  position: absolute;
  left: 14px;
  top: -6px;
  width: 12px;
  height: 12px;
  border: 3px solid #bbb;
  border-radius: 50%;
  background: #fff;
}
.pl2 {
  margin-left: 11px;
}
.zoomv {
  margin-left: 23px;
  white-space: nowrap;
}
.zoomc {
  margin-left: 13px;
  border-top-color: #888;
}
.fsic {
  width: 24px;
  height: 24px;
  margin-left: 28px;
}
.fitic {
  width: 26px;
  height: 26px;
  margin-left: 10px;
}
</style>
